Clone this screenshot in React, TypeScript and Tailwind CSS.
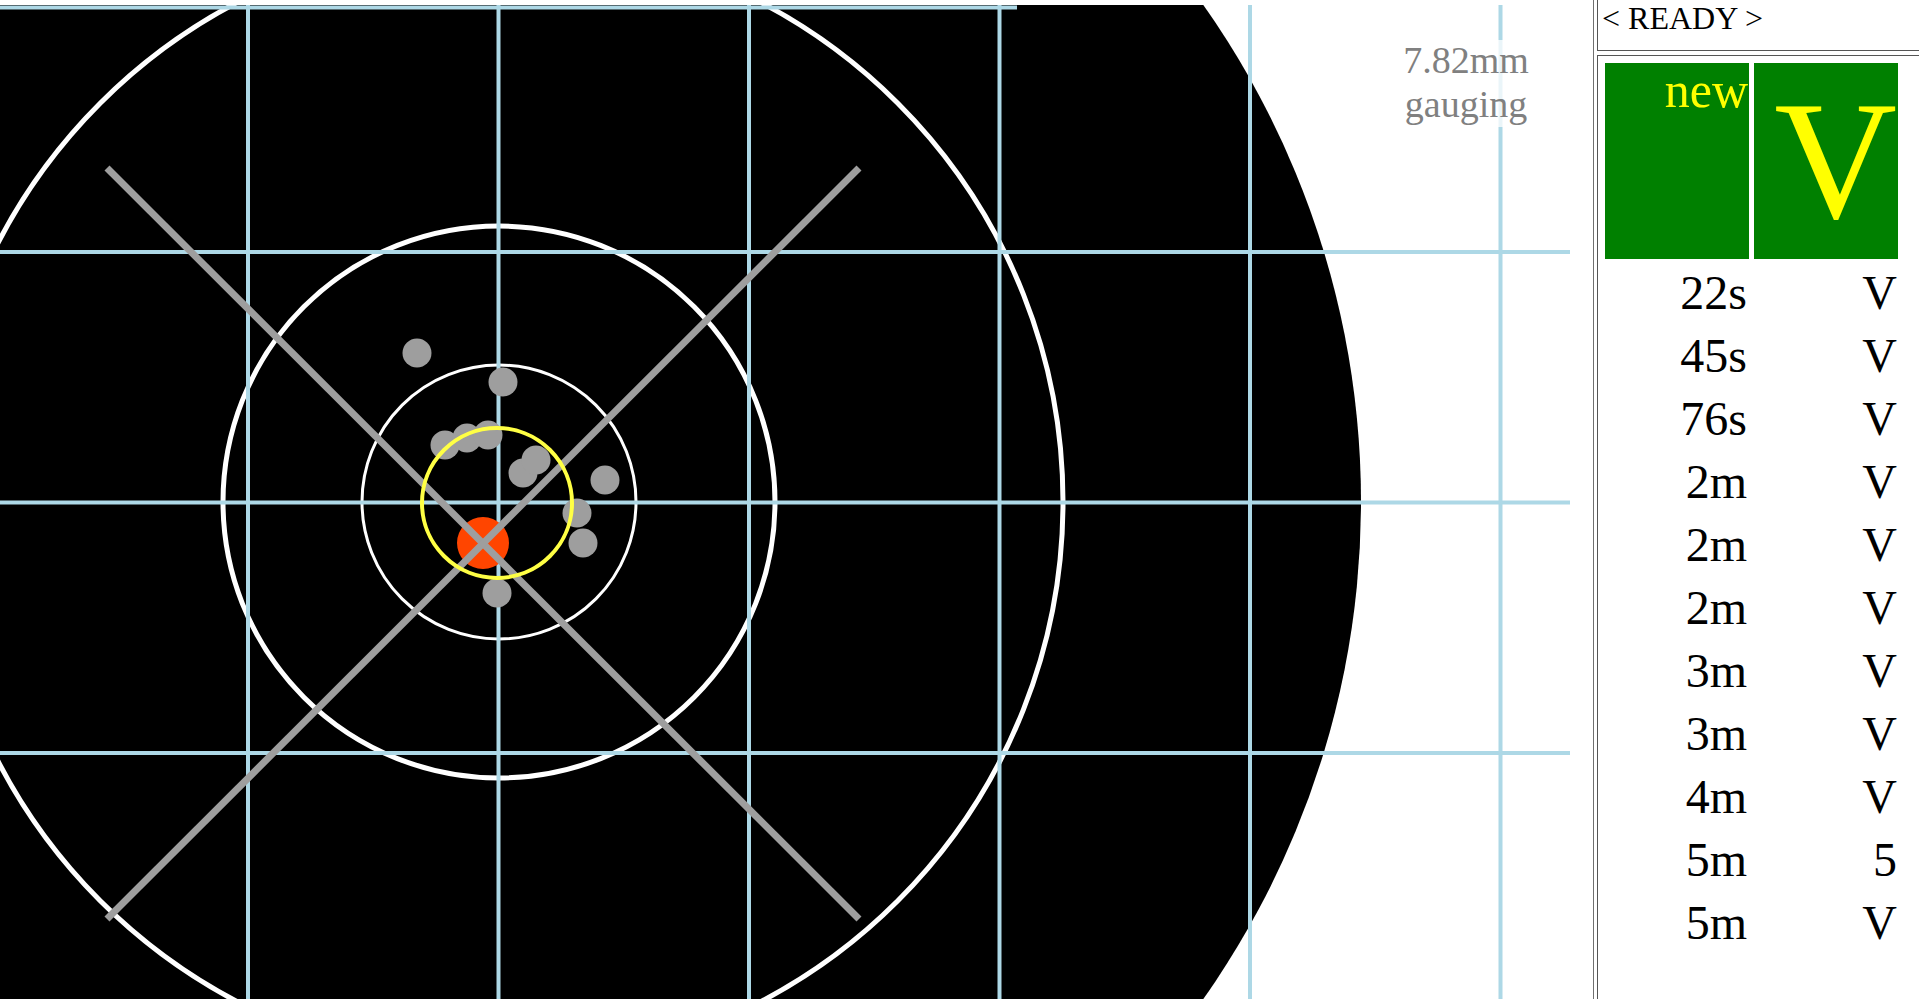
import React from 'react';

const grey = '#9e9e9e';

const shots: [number, number][] = [
  [417, 353],
  [503, 382],
  [445, 445],
  [467, 438],
  [488, 435],
  [523, 473],
  [536, 460],
  [605, 480],
  [577, 513],
  [583, 543],
  [497, 593],
];

const rows: [string, string][] = [
  ['22s', 'V'],
  ['45s', 'V'],
  ['76s', 'V'],
  ['2m', 'V'],
  ['2m', 'V'],
  ['2m', 'V'],
  ['3m', 'V'],
  ['3m', 'V'],
  ['4m', 'V'],
  ['5m', '5'],
  ['5m', 'V'],
];

const Target: React.FC = () => {
  const vLines = [248, 498.5, 749, 999.5, 1250, 1500.5];
  const hLines = [252, 502.5, 753];

  return (
    <svg width={1593} height={999} viewBox="0 0 1593 999" className="block shrink-0">
      <defs>
        <clipPath id="stage">
          <rect x={0} y={5} width={1593} height={994} />
        </clipPath>
      </defs>
      <g clipPath="url(#stage)">
        {/* target face */}
        <circle cx={499} cy={502} r={862} fill="#000" />
        <circle cx={499} cy={502} r={564} fill="none" stroke="#fff" strokeWidth={5} />
        <circle cx={499} cy={502} r={276} fill="none" stroke="#fff" strokeWidth={5} />
        <circle cx={499} cy={502} r={137} fill="none" stroke="#fff" strokeWidth={3} />

        {/* grid */}
        {vLines.map(x => (
          <line key={x} x1={x} y1={0} x2={x} y2={999} stroke="#add8e6" strokeWidth={4} />
        ))}
        {hLines.map(y => (
          <line key={y} x1={0} y1={y} x2={1570} y2={y} stroke="#add8e6" strokeWidth={4} />
        ))}
        <line x1={0} y1={7.5} x2={1017} y2={7.5} stroke="#add8e6" strokeWidth={4} />

        {/* gauging label */}
        <rect x={1395} y={40} width={145} height={87} fill="#fff" fillOpacity={0.75} />
        <text
          x={1466}
          y={73}
          textAnchor="middle"
          fill="#808080"
          fontSize={38}
          fontFamily="'Liberation Serif', 'Times New Roman', serif"
        >
          7.82mm
        </text>
        <text
          x={1466}
          y={117}
          textAnchor="middle"
          fill="#808080"
          fontSize={38}
          fontFamily="'Liberation Serif', 'Times New Roman', serif"
        >
          gauging
        </text>

        {/* group centre */}
        <circle cx={483} cy={543} r={26} fill="#ff4500" />
        <line x1={107} y1={168} x2={859} y2={919} stroke={grey} strokeWidth={7} />
        <line x1={859} y1={168} x2={107} y2={919} stroke={grey} strokeWidth={7} />

        {/* shots */}
        {shots.map(([x, y], i) => (
          <circle key={i} cx={x} cy={y} r={14.5} fill={grey} />
        ))}

        <circle cx={497} cy={503} r={75} fill="none" stroke="#ffff44" strokeWidth={4} />
      </g>
    </svg>
  );
};

export default function App() {
  return (
    <div className="flex w-[1919px] h-[999px] overflow-hidden bg-white text-black font-['Liberation_Serif','Times_New_Roman',serif]">
      <Target />

      {/* status panel */}
      <div className="flex flex-col w-[330px] shrink-0 border-l border-[#707070] pl-[3px]">
        <div className="h-[51px] shrink-0 border-l border-b border-[#555] pl-[4px] pt-[2px] text-[32px] leading-none whitespace-nowrap">
          &lt; READY &gt;
        </div>

        <div className="flex-1 mt-[4px] border-l border-t border-[#555] pl-[7px] pt-[7px]">
          <div className="flex gap-[5px]">
            <div className="w-[144px] h-[196px] bg-[#008000] text-[#ffff00] text-right pr-[1px] pt-[2px] text-[50px] leading-none">
              new
            </div>
            <div className="w-[144px] h-[196px] bg-[#008000] text-[#ffff00] text-right pr-[1px] pt-[12px] text-[170px] leading-none">
              V
            </div>
          </div>

          <div className="mt-[2px] flex flex-col">
            {rows.map(([time, score], i) => (
              <div key={i} className="flex gap-[5px] h-[63px] text-[48px] leading-[63px]">
                <div className="w-[144px] text-right pr-[2px]">{time}</div>
                <div className="w-[144px] text-right pr-[1px]">{score}</div>
              </div>
            ))}
          </div>
        </div>
      </div>
    </div>
  );
}
